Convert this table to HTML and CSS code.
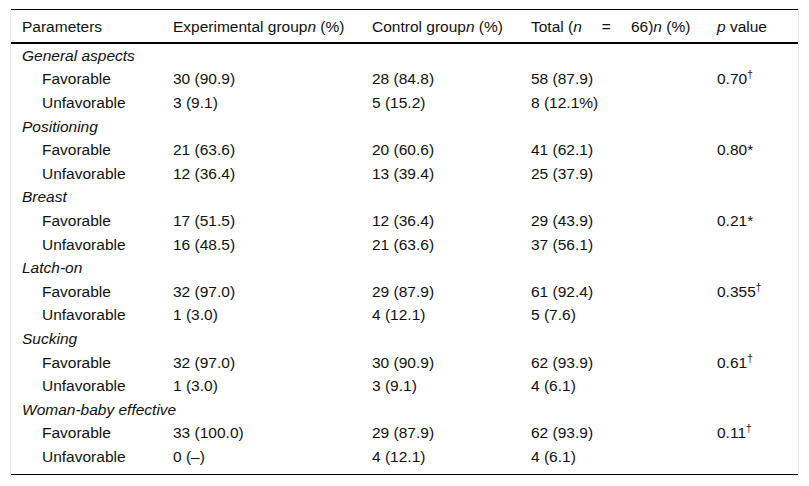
FILE: index.html
```html
<!DOCTYPE html>
<html lang="en">
<head>
<meta charset="utf-8">
<title>Table</title>
<link rel="stylesheet" href="styles.css">
</head>
<body>
<div class="table-wrap">
<table class="data">
<colgroup>
<col class="c1"><col class="c2"><col class="c3"><col class="c4"><col class="c5">
</colgroup>
<thead>
<tr>
<th>Parameters</th>
<th>Experimental group<i>n</i> (%)</th>
<th>Control group<i>n</i> (%)</th>
<th>Total (<i>n</i><span class="eq">=</span>66)<i>n</i> (%)</th>
<th><i>p</i> value</th>
</tr>
</thead>
<tbody>
<tr class="cat"><td colspan="5">General aspects</td></tr>
<tr><td class="sub">Favorable</td><td>30 (90.9)</td><td>28 (84.8)</td><td>58 (87.9)</td><td>0.70<sup>†</sup></td></tr>
<tr><td class="sub">Unfavorable</td><td>3 (9.1)</td><td>5 (15.2)</td><td>8 (12.1%)</td><td></td></tr>
<tr class="cat"><td colspan="5">Positioning</td></tr>
<tr><td class="sub">Favorable</td><td>21 (63.6)</td><td>20 (60.6)</td><td>41 (62.1)</td><td>0.80*</td></tr>
<tr><td class="sub">Unfavorable</td><td>12 (36.4)</td><td>13 (39.4)</td><td>25 (37.9)</td><td></td></tr>
<tr class="cat"><td colspan="5">Breast</td></tr>
<tr><td class="sub">Favorable</td><td>17 (51.5)</td><td>12 (36.4)</td><td>29 (43.9)</td><td>0.21*</td></tr>
<tr><td class="sub">Unfavorable</td><td>16 (48.5)</td><td>21 (63.6)</td><td>37 (56.1)</td><td></td></tr>
<tr class="cat"><td colspan="5">Latch-on</td></tr>
<tr><td class="sub">Favorable</td><td>32 (97.0)</td><td>29 (87.9)</td><td>61 (92.4)</td><td>0.355<sup>†</sup></td></tr>
<tr><td class="sub">Unfavorable</td><td>1 (3.0)</td><td>4 (12.1)</td><td>5 (7.6)</td><td></td></tr>
<tr class="cat"><td colspan="5">Sucking</td></tr>
<tr><td class="sub">Favorable</td><td>32 (97.0)</td><td>30 (90.9)</td><td>62 (93.9)</td><td>0.61<sup>†</sup></td></tr>
<tr><td class="sub">Unfavorable</td><td>1 (3.0)</td><td>3 (9.1)</td><td>4 (6.1)</td><td></td></tr>
<tr class="cat"><td colspan="5">Woman-baby effective</td></tr>
<tr><td class="sub">Favorable</td><td>33 (100.0)</td><td>29 (87.9)</td><td>62 (93.9)</td><td>0.11<sup>†</sup></td></tr>
<tr class="last"><td class="sub">Unfavorable</td><td>0 (–)</td><td>4 (12.1)</td><td>4 (6.1)</td><td></td></tr>
</tbody>
</table>
</div>
</body>
</html>
```
FILE: styles.css
```css
html, body {
  margin: 0;
  padding: 0;
  background: #ffffff;
}
body {
  padding: 10px 10px 0 10px;
  font-family: "Liberation Sans", Arial, sans-serif;
  font-size: 15.5px;
  color: #111111;
}
.table-wrap {
  width: 787px;
  border-left: 1px solid #e6e6e6;
  border-right: 1px solid #e6e6e6;
  padding-bottom: 2px;
}
.data {
  width: 787px;
  table-layout: fixed;
  border-collapse: collapse;
  border-top: 1px solid #000;
  border-bottom: 1px solid #000;
  margin-top: -1px;
}
.c1 { width: 151px; }
.c2 { width: 199px; }
.c3 { width: 159px; }
.c4 { width: 186px; }
.c5 { width: 92px; }
.data th,
.data td {
  text-align: left;
  vertical-align: top;
  white-space: nowrap;
  line-height: 18px;
  height: 18px;
  padding: 2.8px 0 2.8px 11px;
  font-weight: normal;
}
.data thead th {
  padding-top: 8px;
  padding-bottom: 6px;
  border-bottom: 2px solid #000;
}
.data .cat td {
  font-style: italic;
}
.data td.sub {
  padding-left: 31px;
}
.data .last td {
  padding-bottom: 8px;
}
.eq {
  padding: 0 20px;
}
sup {
  font-size: 10px;
  line-height: 0;
  vertical-align: 6px;
}
```
